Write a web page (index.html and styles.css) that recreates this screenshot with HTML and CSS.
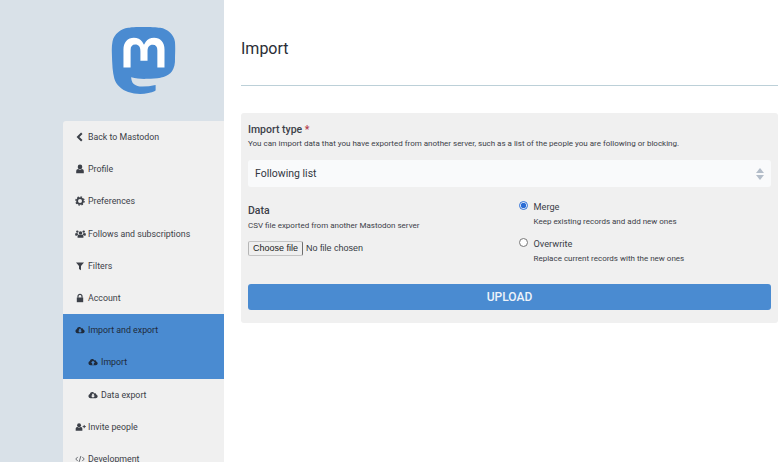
FILE: index.html
```html
<!DOCTYPE html>
<html lang="en">
<head>
<meta charset="utf-8">
<title>Import</title>
<link rel="stylesheet" href="styles.css">
</head>
<body>
<svg class="defs" width="0" height="0" aria-hidden="true">
  <symbol id="i-back" viewBox="0 0 10 10"><path d="M6.800 1.200 3 5l3.800 3.800" fill="none" stroke="currentColor" stroke-width="2"/></symbol>
  <symbol id="i-user" viewBox="0 0 10 10"><circle cx="5" cy="2.900" r="2.300"/><path d="M1.200 9.300V7.200C1.200 5.800 2.200 5 3.200 5c.5.400 1.100.7 1.800.7S6.300 5.400 6.800 5c1 0 2 .8 2 2.200v2.100z"/></symbol>
  <symbol id="i-cog" viewBox="0 0 10 10"><circle cx="5" cy="5" r="2.900" fill="none" stroke="currentColor" stroke-width="1.800"/><circle cx="5" cy="5" r="4.100" fill="none" stroke="currentColor" stroke-width="1.300" stroke-dasharray="1.600 1.620"/></symbol>
  <symbol id="i-users" viewBox="0 0 12 10"><circle cx="6" cy="3.800" r="1.900"/><circle cx="2.500" cy="2.400" r="1.300"/><circle cx="9.500" cy="2.400" r="1.300"/><path d="M2.800 9V7.500C2.800 6.300 3.500 5.600 4.400 5.500c.9.700 2.300.7 3.200 0 .9.100 1.600.8 1.600 2V9z"/><path d="M.2 6.500V5.200C.2 4.400.8 4 1.400 3.900c.5.400 1.200.5 1.700.3-.1.900.2 1.300.6 1.600C3 6 2.500 6.300 2.300 6.900zM11.800 6.500V5.200C11.800 4.400 11.200 4 10.600 3.900c-.5.400-1.200.5-1.700.3.100.9-.2 1.300-.6 1.600.7.200 1.200.5 1.400 1.100z"/></symbol>
  <symbol id="i-filter" viewBox="0 0 10 10"><path d="M1 1.400h8L6 5v4.200L4 8V5z"/></symbol>
  <symbol id="i-lock" viewBox="0 0 10 10"><path d="M1.800 4.500h6.400v4.700H1.800z"/><path d="M3 4.800V3.300a2 2 0 0 1 4 0v1.500" fill="none" stroke="currentColor" stroke-width="1.200"/></symbol>
  <symbol id="i-cloud" viewBox="0 0 12 10"><path fill-rule="evenodd" d="M3 9A2.700 2.700 0 0 1 2.200 3.800 3 3 0 0 1 5 1.500c1.300 0 2.200.7 2.700 1.700 1-.5 2.100.2 2.100 1.200 1 .3 1.800 1.100 1.800 2.200C11.600 8 10.500 9 9.300 9zM5 3.500v2.300H3.500L6 8.200l2.500-2.400H7V3.500z"/></symbol>
  <symbol id="i-cloud-up" viewBox="0 0 12 10"><path fill-rule="evenodd" d="M3 9A2.700 2.700 0 0 1 2.200 3.800 3 3 0 0 1 5 1.500c1.300 0 2.200.7 2.700 1.700 1-.5 2.100.2 2.100 1.200 1 .3 1.800 1.100 1.800 2.200C11.600 8 10.500 9 9.300 9zM5 8.200V5.900H3.500L6 3.500l2.500 2.400H7v2.300z"/></symbol>
  <symbol id="i-useradd" viewBox="0 0 13 10"><circle cx="4.800" cy="2.900" r="2.300"/><path d="M.8 9.300V7.200C.8 5.800 1.900 5 3 5c.5.400 1.100.7 1.800.7S6.100 5.400 6.600 5c1.100 0 2.100.8 2.100 2.200v2.100z"/><path d="M9 4.500h3.800M10.900 2.600v3.800" fill="none" stroke="currentColor" stroke-width="1.100"/></symbol>
  <symbol id="i-code" viewBox="0 0 12 10"><path d="M3.300 2.500.9 5l2.400 2.500M8.700 2.500 11.100 5 8.700 7.500M7 1.500 5 8.500" fill="none" stroke="currentColor" stroke-width=".9"/></symbol>
</svg>
<div class="layout">
  <aside class="sidebar">
    <div class="logo">
      <svg class="logo-mark" viewBox="0 0 24 24" width="67" height="67" aria-label="Mastodon">
        <rect x="4" y="3" width="17" height="12" fill="#fff"/>
        <path fill="#4a8bd1" d="M23.268 5.313c-.35-2.578-2.617-4.61-5.304-5.004C17.51.242 15.792 0 11.813 0h-.03c-3.98 0-4.835.242-5.288.309C3.882.692 1.496 2.518.917 5.127.64 6.412.61 7.837.661 9.143c.074 1.874.088 3.745.26 5.611.118 1.24.325 2.47.62 3.68.55 2.237 2.777 4.098 4.96 4.857 2.336.792 4.849.923 7.256.38.265-.061.527-.132.786-.213.585-.184 1.27-.39 1.774-.753a.057.057 0 0 0 .023-.043v-1.809a.052.052 0 0 0-.02-.041.053.053 0 0 0-.046-.01 20.282 20.282 0 0 1-4.709.545c-2.73 0-3.463-1.284-3.674-1.818a5.593 5.593 0 0 1-.319-1.433.053.053 0 0 1 .066-.054c1.517.363 3.072.546 4.632.546.376 0 .75 0 1.125-.01 1.57-.044 3.224-.124 4.768-.422.038-.008.077-.015.11-.024 2.435-.464 4.753-1.92 4.989-5.604.008-.145.03-1.52.03-1.67.002-.512.167-3.63-.024-5.545zm-3.748 9.195h-2.561V8.290c0-1.309-.55-1.976-1.67-1.976-1.23 0-1.846.79-1.846 2.35v3.403h-2.546V8.663c0-1.56-.617-2.35-1.848-2.35-1.112 0-1.668.668-1.67 1.977v6.218H4.822V8.102c0-1.31.337-2.35 1.011-3.12.696-.77 1.608-1.164 2.74-1.164 1.311 0 2.302.5 2.962 1.498l.638 1.06.638-1.06c.66-.999 1.65-1.498 2.96-1.498 1.13 0 2.043.395 2.74 1.164.675.77 1.012 1.81 1.012 3.12z"/>
      </svg>
    </div>
    <nav class="menu">
      <a class="item"><svg class="ico"><use href="#i-back"/></svg>Back to Mastodon</a>
      <a class="item"><svg class="ico"><use href="#i-user"/></svg>Profile</a>
      <a class="item"><svg class="ico"><use href="#i-cog"/></svg>Preferences</a>
      <a class="item"><svg class="ico wide"><use href="#i-users"/></svg>Follows and subscriptions</a>
      <a class="item"><svg class="ico"><use href="#i-filter"/></svg>Filters</a>
      <a class="item"><svg class="ico"><use href="#i-lock"/></svg>Account</a>
      <a class="item active"><svg class="ico"><use href="#i-cloud"/></svg>Import and export</a>
      <a class="item sub active"><svg class="ico"><use href="#i-cloud-up"/></svg>Import</a>
      <a class="item sub"><svg class="ico"><use href="#i-cloud"/></svg>Data export</a>
      <a class="item"><svg class="ico wide"><use href="#i-useradd"/></svg>Invite people</a>
      <a class="item"><svg class="ico"><use href="#i-code"/></svg>Development</a>
    </nav>
  </aside>
  <main class="content">
    <h1 class="title">Import</h1>
    <hr class="rule">
    <form class="panel">
      <label class="field-label">Import type <abbr class="req">*</abbr></label>
      <p class="hint">You can import data that you have exported from another server, such as a list of the people you are following or blocking.</p>
      <div class="select-wrap">
        <select class="select"><option>Following list</option></select>
        <svg class="arrows" viewBox="0 0 8 12" width="8" height="12"><path d="M4 0 8 5H0z"/><path d="M4 12 0 7h8z"/></svg>
      </div>
      <div class="columns">
        <div class="col data-col">
          <label class="field-label">Data</label>
          <p class="hint hint-data">CSV file exported from another Mastodon server</p>
          <div class="file">
            <button class="file-btn" type="button">Choose file</button>
            <span class="file-name">No file chosen</span>
          </div>
        </div>
        <div class="col radios">
          <label class="radio">
            <input type="radio" name="mode" checked>
            <span class="radio-text"><span class="radio-name">Merge</span><span class="radio-desc">Keep existing records and add new ones</span></span>
          </label>
          <label class="radio">
            <input type="radio" name="mode">
            <span class="radio-text"><span class="radio-name">Overwrite</span><span class="radio-desc">Replace current records with the new ones</span></span>
          </label>
        </div>
      </div>
      <button class="upload" type="button">UPLOAD</button>
    </form>
  </main>
</div>
</body>
</html>
```
FILE: styles.css
```css
* { box-sizing: border-box; }
html, body { margin: 0; height: 100%; overflow: hidden; }
body { font-family: Roboto, "Liberation Sans", sans-serif; color: #282c37; background: #fff; }
.defs { position: absolute; }
.layout { display: flex; height: 462px; }
.sidebar { width: 224px; flex: none; background: #d9e1e8; padding-left: 63px; }
.logo { height: 121px; padding-top: 27px; display: flex; justify-content: center; align-items: flex-start; }
.menu { background: #f0f0f0; border-top-left-radius: 3px; }
.item { display: flex; align-items: center; height: 32.2px; padding-left: 12px; font-size: 8.8px; color: #3c4048; }
.item.active { background: #4a8bd1; color: #1f2a3a; }
.item.sub { padding-left: 25px; }
.ico { width: 10px; height: 10px; margin-right: 3px; fill: currentColor; flex: none; overflow: visible; }
.ico.wide { width: 11px; margin-left: -.5px; margin-right: 2.5px; }
.content { flex: 1; padding: 0 2px 0 17px; min-width: 0; }
.title { margin: 0; height: 85px; padding-top: 39px; font-size: 16px; line-height: 20px; font-weight: 400; color: #2a2e36; }
.rule { margin: 0 0 27px; border: 0; height: 1px; background: #bcd0d8; }
.panel { background: #f0f0f0; border-radius: 3px; padding: 10px 7px 13px; height: 210px; }
.field-label { display: block; font-size: 10.5px; line-height: 13px; font-weight: 500; color: #3c4048; }
.req { color: #b03a48; text-decoration: none; }
.hint { margin: 3px 0 0; font-size: 8px; line-height: 10px; color: #3c4048; white-space: nowrap; }
.select-wrap { position: relative; margin-top: 11px; height: 27px; }
.select { appearance: none; display: block; width: 100%; height: 27px; border: 0; border-radius: 3px; background: #f9fafb; padding: 0 7px; font: 400 10.5px Roboto, sans-serif; color: #33373f; }
.arrows { position: absolute; right: 7px; top: 8px; fill: #b3bdc9; }
.columns { display: flex; margin-top: 12px; height: 85px; }
.col { flex: 1; min-width: 0; }
.data-col { padding-top: 4.5px; }
.hint-data { margin-top: 4px; }
.file { display: flex; align-items: center; gap: 3px; margin-top: 10px; font: 400 9px "Liberation Sans", sans-serif; color: #33373f; }
.file-btn { height: 15px; width: 55px; padding: 0; font: 400 9px "Liberation Sans", sans-serif; color: #222; background: #efefef; border: 1px solid; border-color: #c4c4c4 #6e6e6e #c4c4c4 #b5b5b5; border-radius: 2px; }
.radios { padding: 2px 0 0 18px; }
.radio { display: flex; align-items: flex-start; height: 37px; }
.radio input { margin: 0 6px 0 0; width: 9px; height: 9px; accent-color: #2b6cd4; flex: none; }
.radio-text { display: flex; flex-direction: column; }
.radio-name { font-size: 9.2px; line-height: 11px; color: #3c4048; }
.radio-desc { font-size: 8px; line-height: 10px; margin-top: 5px; color: #3c4048; }
.upload { display: block; width: 100%; height: 26px; border: 0; border-radius: 3px; background: #4a8bd1; color: #eef3fa; font: 500 12px Roboto, sans-serif; }
```
